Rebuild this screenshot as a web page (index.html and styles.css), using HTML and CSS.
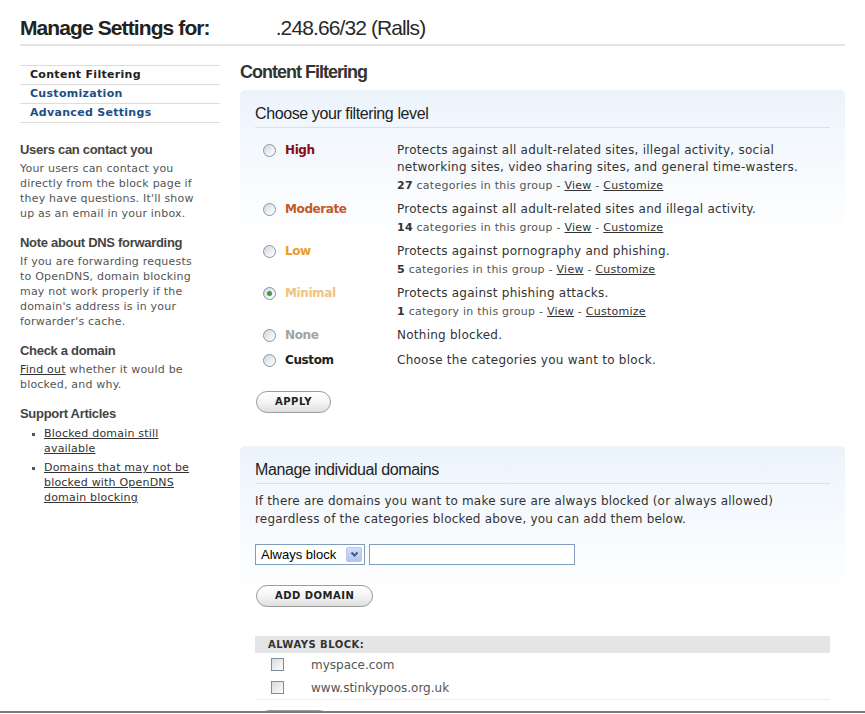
FILE: index.html
```html
<!DOCTYPE html>
<html lang="en">
<head>
<meta charset="utf-8">
<title>Manage Settings</title>
<link rel="stylesheet" href="styles.css">
</head>
<body>
<div class="frame">
  <header class="top">
    <h1><span class="title">Manage Settings for:</span><span class="ip">.248.66/32 (Ralls)</span></h1>
  </header>
  <div class="layout">
    <aside class="side">
      <ul class="nav">
        <li class="current">Content Filtering</li>
        <li><a href="#">Customization</a></li>
        <li><a href="#">Advanced Settings</a></li>
      </ul>
      <section class="note first">
        <h3>Users can contact you</h3>
        <p>Your users can contact you directly from the block page if they have questions. It'll show up as an email in your inbox.</p>
      </section>
      <section class="note">
        <h3>Note about DNS forwarding</h3>
        <p>If you are forwarding requests to OpenDNS, domain blocking may not work properly if the domain's address is in your forwarder's cache.</p>
      </section>
      <section class="note">
        <h3>Check a domain</h3>
        <p><a href="#">Find out</a> whether it would be blocked, and why.</p>
      </section>
      <section class="note">
        <h3>Support Articles</h3>
        <ul class="articles">
          <li><a href="#">Blocked domain still available</a></li>
          <li><a href="#">Domains that may not be blocked with OpenDNS domain blocking</a></li>
        </ul>
      </section>
    </aside>
    <main class="main">
      <h2>Content Filtering</h2>
      <section class="panel">
        <h3 class="panel-title">Choose your filtering level</h3>
        <div class="levels">
          <div class="level">
            <span class="radio"></span>
            <span class="label high">High</span>
            <div class="desc">
              <p>Protects against all adult-related sites, illegal activity, social networking sites, video sharing sites, and general time-wasters.</p>
              <p class="meta"><b>27</b> categories in this group - <a href="#">View</a> - <a href="#">Customize</a></p>
            </div>
          </div>
          <div class="level">
            <span class="radio"></span>
            <span class="label moderate">Moderate</span>
            <div class="desc">
              <p>Protects against all adult-related sites and illegal activity.</p>
              <p class="meta"><b>14</b> categories in this group - <a href="#">View</a> - <a href="#">Customize</a></p>
            </div>
          </div>
          <div class="level">
            <span class="radio"></span>
            <span class="label low">Low</span>
            <div class="desc">
              <p>Protects against pornography and phishing.</p>
              <p class="meta"><b>5</b> categories in this group - <a href="#">View</a> - <a href="#">Customize</a></p>
            </div>
          </div>
          <div class="level">
            <span class="radio checked"></span>
            <span class="label minimal">Minimal</span>
            <div class="desc">
              <p>Protects against phishing attacks.</p>
              <p class="meta"><b>1</b> category in this group - <a href="#">View</a> - <a href="#">Customize</a></p>
            </div>
          </div>
          <div class="level none-row">
            <span class="radio"></span>
            <span class="label none">None</span>
            <div class="desc"><p>Nothing blocked.</p></div>
          </div>
          <div class="level">
            <span class="radio"></span>
            <span class="label custom">Custom</span>
            <div class="desc"><p>Choose the categories you want to block.</p></div>
          </div>
        </div>
        <div class="btn apply">APPLY</div>
      </section>

      <section class="panel domains">
        <h3 class="panel-title">Manage individual domains</h3>
        <p class="intro">If there are domains you want to make sure are always blocked (or always allowed) regardless of the categories blocked above, you can add them below.</p>
        <div class="add-form">
          <div class="select"><span>Always block</span><span class="arrow"><svg width="9" height="7" viewBox="0 0 9 7"><path d="M1.5 1.5 L4.5 4.5 L7.5 1.5" fill="none" stroke="#3d5a8c" stroke-width="2"/></svg></span></div>
          <div class="text-input"></div>
        </div>
        <div class="btn add">ADD DOMAIN</div>
        <div class="list">
          <div class="list-head">ALWAYS BLOCK:</div>
          <div class="list-row"><span class="check"></span><span class="domain">myspace.com</span></div>
          <div class="list-row"><span class="check"></span><span class="domain">www.stinkypoos.org.uk</span></div>
        </div>
        <div class="btn remove"></div>
      </section>
    </main>
  </div>
</div>
</body>
</html>
```

FILE: styles.css
```css
body {
  margin: 0;
  font-family: "DejaVu Sans", Verdana, sans-serif;
  color: #333;
  background: #fff;
}

.frame {
  height: 711px;
  overflow: hidden;
  border-bottom: 2px solid #7c7c7c;
  padding: 0 20px;
}

.top {
  width: 825px;
  padding-top: 15px;
  padding-bottom: 3px;
  border-bottom: 2px solid #e4e4e4;
}

.top h1 {
  margin: 0;
  font: bold 21px/26px "Liberation Sans", Arial, sans-serif;
  letter-spacing: -0.9px;
  color: #222;
}

.top .ip {
  font-weight: normal;
  margin-left: 66px;
  color: #2a2a2a;
}

.layout {
  display: grid;
  grid-template-columns: 200px 605px;
  column-gap: 20px;
  align-items: start;
}

/* Sidebar */
.side {
  margin-top: 19px;
  font-size: 11px;
  line-height: 15px;
  color: #555;
  letter-spacing: 0.2px;
}

.nav {
  list-style: none;
  margin: 0;
  padding: 0;
  border-top: 1px solid #dcdcdc;
}

.nav li {
  height: 18px;
  line-height: 18px;
  padding-left: 10px;
  border-bottom: 1px solid #dcdcdc;
  font-weight: bold;
  letter-spacing: 0.3px;
}

.nav li.current {
  color: #222;
}

.nav a {
  color: #1d4f85;
  text-decoration: none;
}

.note {
  margin-top: 14px;
  width: 184px;
}

.note.first {
  margin-top: 19px;
}

.note h3 {
  margin: 0 0 3px;
  font: bold 13px/16px "Liberation Sans", Arial, sans-serif;
  letter-spacing: -0.3px;
  color: #444;
}

.note p {
  margin: 0;
}

.note a {
  color: #333;
  text-decoration: underline;
}

.articles {
  list-style: square;
  margin: 4px 0 0;
  padding: 0 0 0 24px;
}

.articles li {
  margin-bottom: 4px;
}

.articles li::marker {
  color: #555;
  font-size: 9px;
}

/* Main */
.main {
  margin-top: 15px;
}

.main h2 {
  margin: 0 0 7px;
  font: bold 18px/22px "Liberation Sans", Arial, sans-serif;
  letter-spacing: -1px;
  color: #333;
}

.panel {
  border-radius: 5px;
  background: linear-gradient(to bottom, #ebf3fb 0, #f3f8fd 50px, #ffffff 150px);
  padding: 14px 15px 18px;
}

.panel-title {
  margin: 0;
  padding-bottom: 4px;
  border-bottom: 1px solid #dce1e7;
  font: 16px/19px "Liberation Sans", Arial, sans-serif;
  letter-spacing: -0.4px;
  color: #222;
}

.levels {
  margin-top: 14px;
  display: flex;
  flex-direction: column;
  gap: 6px;
}

.level {
  display: grid;
  grid-template-columns: 22px 112px 1fr;
  padding-left: 8px;
}

.level.none-row {
  margin-bottom: 2px;
}

.radio {
  width: 11px;
  height: 11px;
  margin-top: 2px;
  border: 1px solid #8595a6;
  border-radius: 50%;
  background: linear-gradient(135deg, #d2d7dc 0, #f4f5f6 70%, #ffffff 100%);
  position: relative;
}

.radio.checked::after {
  content: "";
  position: absolute;
  left: 3px;
  top: 3px;
  width: 5px;
  height: 5px;
  border-radius: 50%;
  background: #3f9b3f;
}

.label {
  font-weight: bold;
  font-size: 12px;
  line-height: 17px;
  letter-spacing: -0.4px;
}

.label.high { color: #8b0c12; }
.label.moderate { color: #c4582a; }
.label.low { color: #e89c2c; }
.label.minimal { color: #efc47e; }
.label.none { color: #a2a2a2; }
.label.custom { color: #222; }

.desc p {
  margin: 0;
  font-size: 12px;
  line-height: 17px;
  color: #333;
  letter-spacing: 0.25px;
}

.desc .meta {
  font-size: 11px;
  line-height: 19px;
  color: #555;
}

.meta b {
  color: #333;
}

.meta a {
  color: #333;
  text-decoration: underline;
}

.btn {
  display: block;
  width: max-content;
  min-width: 34px;
  height: 20px;
  padding: 0 18px;
  border: 1px solid #9c9c9c;
  border-radius: 11px;
  background: linear-gradient(to bottom, #ffffff 0, #f5f5f5 50%, #dedede 100%);
  font: bold 10px/20px "DejaVu Sans", Verdana, sans-serif;
  letter-spacing: 0.5px;
  color: #222;
}

.apply {
  margin: 22px 0 0 1px;
}

/* Domains panel */
.domains {
  margin-top: 15px;
  padding-bottom: 20px;
}

.intro {
  margin: 8px 0 0;
  font-size: 12px;
  line-height: 18px;
  color: #333;
  letter-spacing: 0.2px;
}

.add-form {
  margin-top: 16px;
  display: flex;
  gap: 4px;
}

.select {
  width: 110px;
  height: 21px;
  box-sizing: border-box;
  border: 1px solid #7f9db9;
  background: #fff;
  display: flex;
  align-items: center;
  justify-content: space-between;
  padding: 0 2px 0 5px;
  font: 13px "Liberation Sans", Arial, sans-serif;
  color: #000;
}

.arrow {
  width: 16px;
  height: 15px;
  box-sizing: border-box;
  border: 1px solid #b4c6ee;
  border-radius: 2px;
  background: linear-gradient(to bottom, #d0dcf8, #b2c5ef);
  display: flex;
  align-items: center;
  justify-content: center;
}

.text-input {
  width: 206px;
  height: 21px;
  box-sizing: border-box;
  border: 1px solid #7f9db9;
  background: #fff;
}

.add {
  margin: 20px 0 0 1px;
}

.list {
  margin-top: 29px;
}

.list-head {
  height: 17px;
  line-height: 17px;
  padding-left: 13px;
  background: #e5e5e5;
  font: bold 10px/17px "DejaVu Sans", Verdana, sans-serif;
  letter-spacing: 0.5px;
  color: #333;
}

.list-row {
  display: flex;
  align-items: center;
  height: 23px;
  padding-left: 16px;
}

.list-row:last-child {
  border-bottom: 1px solid #eeeeee;
}

.check {
  width: 11px;
  height: 11px;
  border: 1px solid #7d8d9c;
  background: linear-gradient(135deg, #d9dbdd 0, #f2f2f2 70%, #ffffff 100%);
  flex: none;
}

.domain {
  margin-left: 27px;
  font-size: 12px;
  color: #555;
}

.remove {
  margin: 10px 0 0 3px;
}
```
